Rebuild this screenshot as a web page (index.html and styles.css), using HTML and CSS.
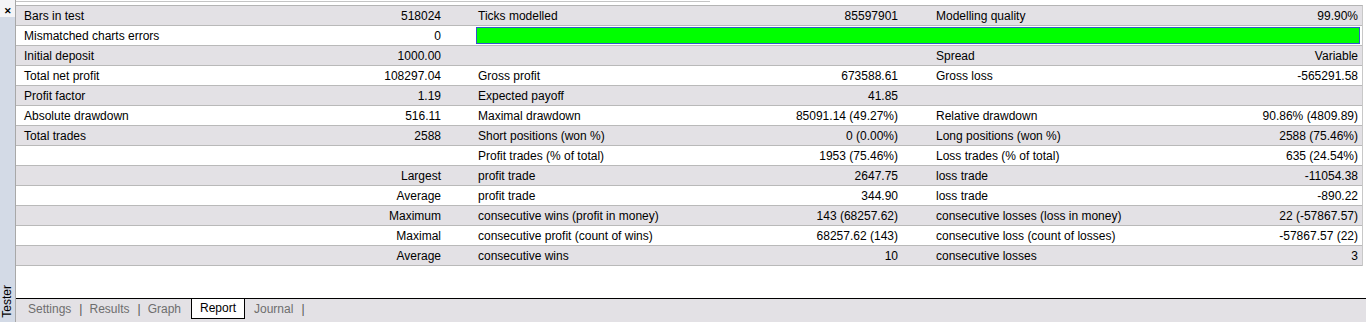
FILE: index.html
```html
<!DOCTYPE html>
<html lang="en">
<head>
<meta charset="UTF-8">
<title>Tester - Report</title>
<link rel="stylesheet" href="styles.css">
</head>
<body>
<div class="side">
  <div class="close">&#x2715;</div>
  <div class="side-bar">
    <span class="side-title">Tester</span>
  </div>
</div>
<div class="main">
  <div class="top"><div class="top-line"></div></div>
  <div class="report">
    <div class="row shade">
      <div class="lbl">Bars in test</div><div class="val">518024</div>
      <div class="lbl2">Ticks modelled</div><div class="val">85597901</div>
      <div class="lbl3">Modelling quality</div><div class="val end">99.90%</div>
    </div>
    <div class="row">
      <div class="lbl">Mismatched charts errors</div><div class="val">0</div>
      <div class="quality"><div class="quality-bar"></div></div>
    </div>
    <div class="row shade">
      <div class="lbl">Initial deposit</div><div class="val">1000.00</div>
      <div class="lbl2"></div><div class="val"></div>
      <div class="lbl3">Spread</div><div class="val end">Variable</div>
    </div>
    <div class="row">
      <div class="lbl">Total net profit</div><div class="val">108297.04</div>
      <div class="lbl2">Gross profit</div><div class="val">673588.61</div>
      <div class="lbl3">Gross loss</div><div class="val end">-565291.58</div>
    </div>
    <div class="row shade">
      <div class="lbl">Profit factor</div><div class="val">1.19</div>
      <div class="lbl2">Expected payoff</div><div class="val">41.85</div>
      <div class="lbl3"></div><div class="val end"></div>
    </div>
    <div class="row">
      <div class="lbl">Absolute drawdown</div><div class="val">516.11</div>
      <div class="lbl2">Maximal drawdown</div><div class="val">85091.14 (49.27%)</div>
      <div class="lbl3">Relative drawdown</div><div class="val end">90.86% (4809.89)</div>
    </div>
    <div class="row shade">
      <div class="lbl">Total trades</div><div class="val">2588</div>
      <div class="lbl2">Short positions (won %)</div><div class="val">0 (0.00%)</div>
      <div class="lbl3">Long positions (won %)</div><div class="val end">2588 (75.46%)</div>
    </div>
    <div class="row">
      <div class="lbl"></div><div class="val"></div>
      <div class="lbl2">Profit trades (% of total)</div><div class="val">1953 (75.46%)</div>
      <div class="lbl3">Loss trades (% of total)</div><div class="val end">635 (24.54%)</div>
    </div>
    <div class="row shade">
      <div class="lbl right">Largest</div>
      <div class="lbl2">profit trade</div><div class="val">2647.75</div>
      <div class="lbl3">loss trade</div><div class="val end">-11054.38</div>
    </div>
    <div class="row">
      <div class="lbl right">Average</div>
      <div class="lbl2">profit trade</div><div class="val">344.90</div>
      <div class="lbl3">loss trade</div><div class="val end">-890.22</div>
    </div>
    <div class="row shade">
      <div class="lbl right">Maximum</div>
      <div class="lbl2">consecutive wins (profit in money)</div><div class="val">143 (68257.62)</div>
      <div class="lbl3">consecutive losses (loss in money)</div><div class="val end">22 (-57867.57)</div>
    </div>
    <div class="row">
      <div class="lbl right">Maximal</div>
      <div class="lbl2">consecutive profit (count of wins)</div><div class="val">68257.62 (143)</div>
      <div class="lbl3">consecutive loss (count of losses)</div><div class="val end">-57867.57 (22)</div>
    </div>
    <div class="row shade">
      <div class="lbl right">Average</div>
      <div class="lbl2">consecutive wins</div><div class="val">10</div>
      <div class="lbl3">consecutive losses</div><div class="val end">3</div>
    </div>
  </div>
  <div class="filler"></div>
  <div class="tabs">
    <span class="tab">Settings</span><span class="sep">|</span>
    <span class="tab">Results</span><span class="sep">|</span>
    <span class="tab graph">Graph</span>
    <span class="tab active">Report</span>
    <span class="tab">Journal</span><span class="sep">|</span>
  </div>
</div>
</body>
</html>
```

FILE: styles.css
```css
body { margin: 0; height: 322px; display: flex; font-family: "Liberation Sans", Arial, sans-serif; font-size: 12px; color: #000; background: #fff; overflow: hidden; }
.side { width: 15px; display: flex; flex-direction: column; border-right: 1px solid #a8a8a8; }
.close { height: 17px; font-size: 9px; font-weight: bold; text-align: center; line-height: 22px; padding-left: 1px; background: #f4f4f6; }
.side-bar { flex: 1; background: #d3dae6; display: flex; align-items: flex-end; justify-content: center; }
.side-title { writing-mode: vertical-rl; transform: rotate(180deg); font-size: 12px; line-height: 15px; padding-top: 2px; margin-bottom: 2px; }
.main { flex: 1; display: flex; flex-direction: column; }
.top { height: 5px; }
.top-line { width: 694px; height: 1px; margin-top: 1px; background: #c4c4c4; }
.report { border-top: 1px solid #b4b4b4; margin-right: 3px; border-right: 1px solid #c8c8c8; }
.row { display: grid; grid-template-columns: 330px 115px 300px 157px 1fr 120px; height: 19px; border-bottom: 1px solid #b9b9b9; background: #fff; }
.row > div { white-space: nowrap; overflow: hidden; padding-top: 1px; line-height: 19px; }
.row.shade { background: #e3e1e5; }
.row .right { grid-column: 1 / 3; text-align: right; padding-right: 20px; }
.lbl { padding-left: 8px; }
.lbl2 { padding-left: 17px; }
.lbl3 { padding-left: 18px; }
.val { text-align: right; padding-right: 20px; }
.val.end { padding-right: 4px; }
.row > .quality { grid-column: 3 / 7; padding: 1px 2px 1px 15px; }
.quality-bar { height: 15px; background: #00ff00; border: 1px solid #3355cc; }
.filler { flex: 1; background: #fff; }
.tabs { height: 23px; border-top: 1px solid #000; background: #e3e1e5; display: flex; align-items: flex-start; padding-left: 12px; color: #6e6e6e; }
.tab { line-height: 20px; }
.sep { line-height: 20px; color: #555; margin: 0 7px 0 8px; }
.tab.graph { margin-right: 10px; }
.tab.active { background: #fff; color: #000; border: 1px solid #000; border-top: none; padding: 0 8px; margin-right: 9px; height: 19px; line-height: 19px; }
```
